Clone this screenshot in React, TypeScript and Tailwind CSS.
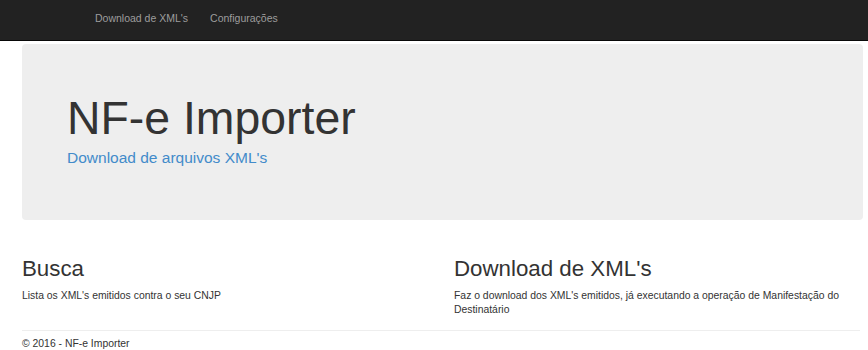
const font = { fontFamily: '"Liberation Sans", Arial, sans-serif' };

function NavBar() {
  return (
    <nav className="h-[41px] bg-[#222222] border-b border-[#080808]">
      <ul className="flex h-full items-center pl-[84px]">
        <li>
          <a className="block px-[11px] pb-[3px] text-[10.5px] text-[#9d9d9d]">Download de XML's</a>
        </li>
        <li>
          <a className="block px-[11px] pb-[3px] text-[10.5px] text-[#9d9d9d]">Configurações</a>
        </li>
      </ul>
    </nav>
  );
}

function Feature({ title, text }: { title: string; text: string }) {
  return (
    <div>
      <h2 className="mt-[15px] mb-[7px] text-[22.3px] leading-[1.1] text-[#333333]">{title}</h2>
      <p className="mb-[7px] text-[10.4px] leading-[14.6px] text-[#333333]">{text}</p>
    </div>
  );
}

export default function App() {
  return (
    <div className="min-h-[350px] bg-white" style={font}>
      <NavBar />
      <div className="ml-[22px] mr-[5px]">
        <div className="mt-[3px] rounded-[4px] bg-[#eeeeee] px-[45px] pt-[35px] pb-[36px]">
          <h1 className="mt-[14px] mb-[3px] text-[46.4px] leading-[1.1] text-[#333333]">NF-e Importer</h1>
          <p className="mb-[15px] text-[15.5px] leading-[22px] text-[#428bca]">Download de arquivos XML's</p>
        </div>
        <div className="mt-[22px] grid grid-cols-2 gap-x-[26px] pr-[3px]">
          <Feature title="Busca" text="Lista os XML's emitidos contra o seu CNJP" />
          <Feature
            title="Download de XML's"
            text="Faz o download dos XML's emitidos, já executando a operação de Manifestação do Destinatário"
          />
        </div>
        <hr className="mt-[5px] mr-[3px] border-t border-[#eeeeee]" />
        <footer className="pt-[6px]">
          <p className="text-[10.4px] leading-[14.6px] text-[#333333]">© 2016 - NF-e Importer</p>
        </footer>
      </div>
    </div>
  );
}
